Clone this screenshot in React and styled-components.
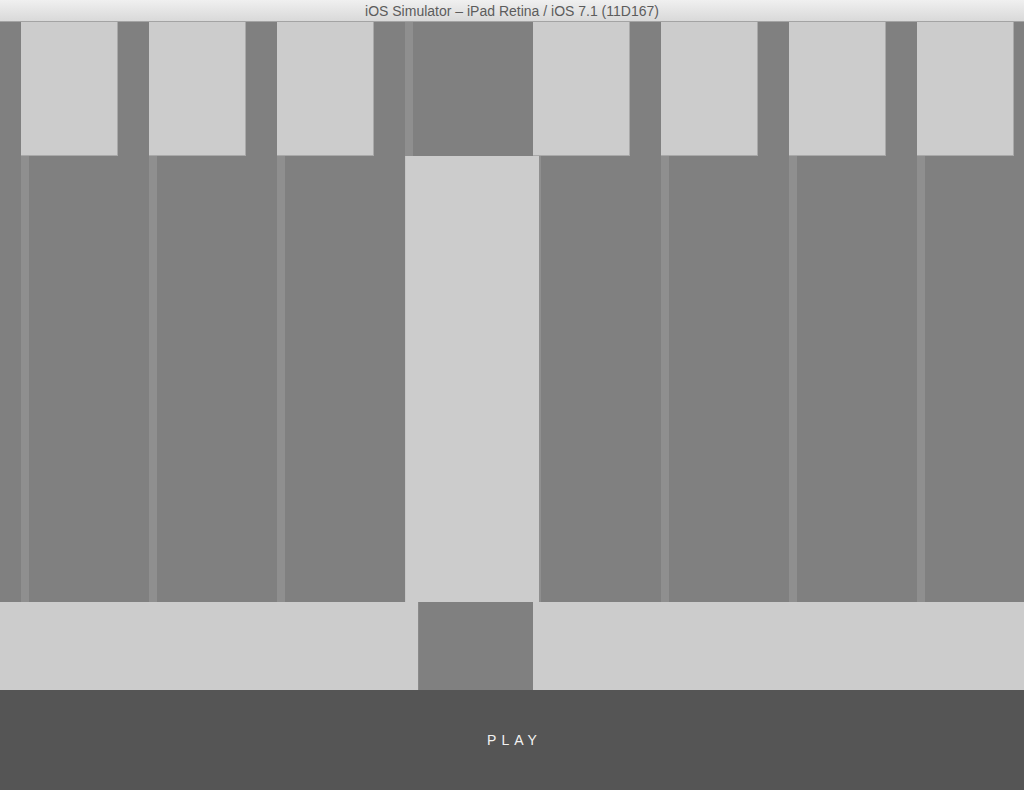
import React from "react";
import styled, { createGlobalStyle } from "styled-components";

const GlobalStyle = createGlobalStyle`
  html, body {
    margin: 0;
    padding: 0;
    background: #808080;
  }
  * {
    box-sizing: border-box;
  }
`;

const Window = styled.div`
  width: 1024px;
  height: 790px;
  display: flex;
  flex-direction: column;
  overflow: hidden;
`;

const TitleBar = styled.div`
  height: 22px;
  flex: 0 0 22px;
  background: linear-gradient(#f0f0f0, #d9d9d9);
  border-bottom: 1px solid #a3a3a3;
  display: flex;
  align-items: center;
  justify-content: center;
  font-family: "Liberation Sans", Arial, sans-serif;
  font-size: 14px;
  color: #5c5c5c;
  padding-top: 1px;
`;

const Screen = styled.div`
  flex: 1;
  display: flex;
  flex-direction: column;
  background: #808080;
`;

const Sequencer = styled.div`
  height: 580px;
  display: grid;
  grid-template-columns: repeat(8, 128px);
`;

const Column = styled.div`
  position: relative;
  display: flex;
  flex-direction: column;
  padding-left: 21px;
  height: 100%;
`;

const Thumb = styled.div`
  width: 97px;
  height: 134px;
  flex: 0 0 134px;
  background: #cccccc;
  border-bottom: 1px solid #a9a9a9;
  border-right: 1px solid #a9a9a9;
`;

const Track = styled.div`
  width: 8px;
  flex: 1;
  background: #8f8f8f;
`;

const Highlight = styled.div`
  position: absolute;
  left: 21px;
  top: 134px;
  width: 134px;
  height: 446px;
  background: #cccccc;
  border-left: 1px solid #c4c4c4;
  z-index: 2;
`;

const Band = styled.div`
  height: 88px;
  flex: 0 0 88px;
  background: #cccccc;
  display: flex;
  padding-left: 418px;
`;

const Marker = styled.div`
  width: 115px;
  background: #808080;
  border-left: 1px solid #8a8a8a;
`;

const PlayBar = styled.button`
  flex: 1;
  border: none;
  margin: 0;
  background: #555555;
  color: #f2f2f2;
  font-family: "Liberation Sans", Arial, sans-serif;
  font-size: 14px;
  letter-spacing: 5px;
  padding: 0 0 0 5px;
  cursor: pointer;
`;

const steps = [0, 1, 2, 3, 4, 5, 6, 7];
const active = 3;

export default function App() {
  return (
    <>
      <GlobalStyle />
      <Window>
        <TitleBar>iOS Simulator – iPad Retina / iOS 7.1 (11D167)</TitleBar>
        <Screen>
          <Sequencer>
            {steps.map((s) => (
              <Column key={s}>
                {s !== active && <Thumb />}
                <Track />
                {s === active && <Highlight />}
              </Column>
            ))}
          </Sequencer>
          <Band>
            <Marker />
          </Band>
          <PlayBar>PLAY</PlayBar>
        </Screen>
      </Window>
    </>
  );
}
